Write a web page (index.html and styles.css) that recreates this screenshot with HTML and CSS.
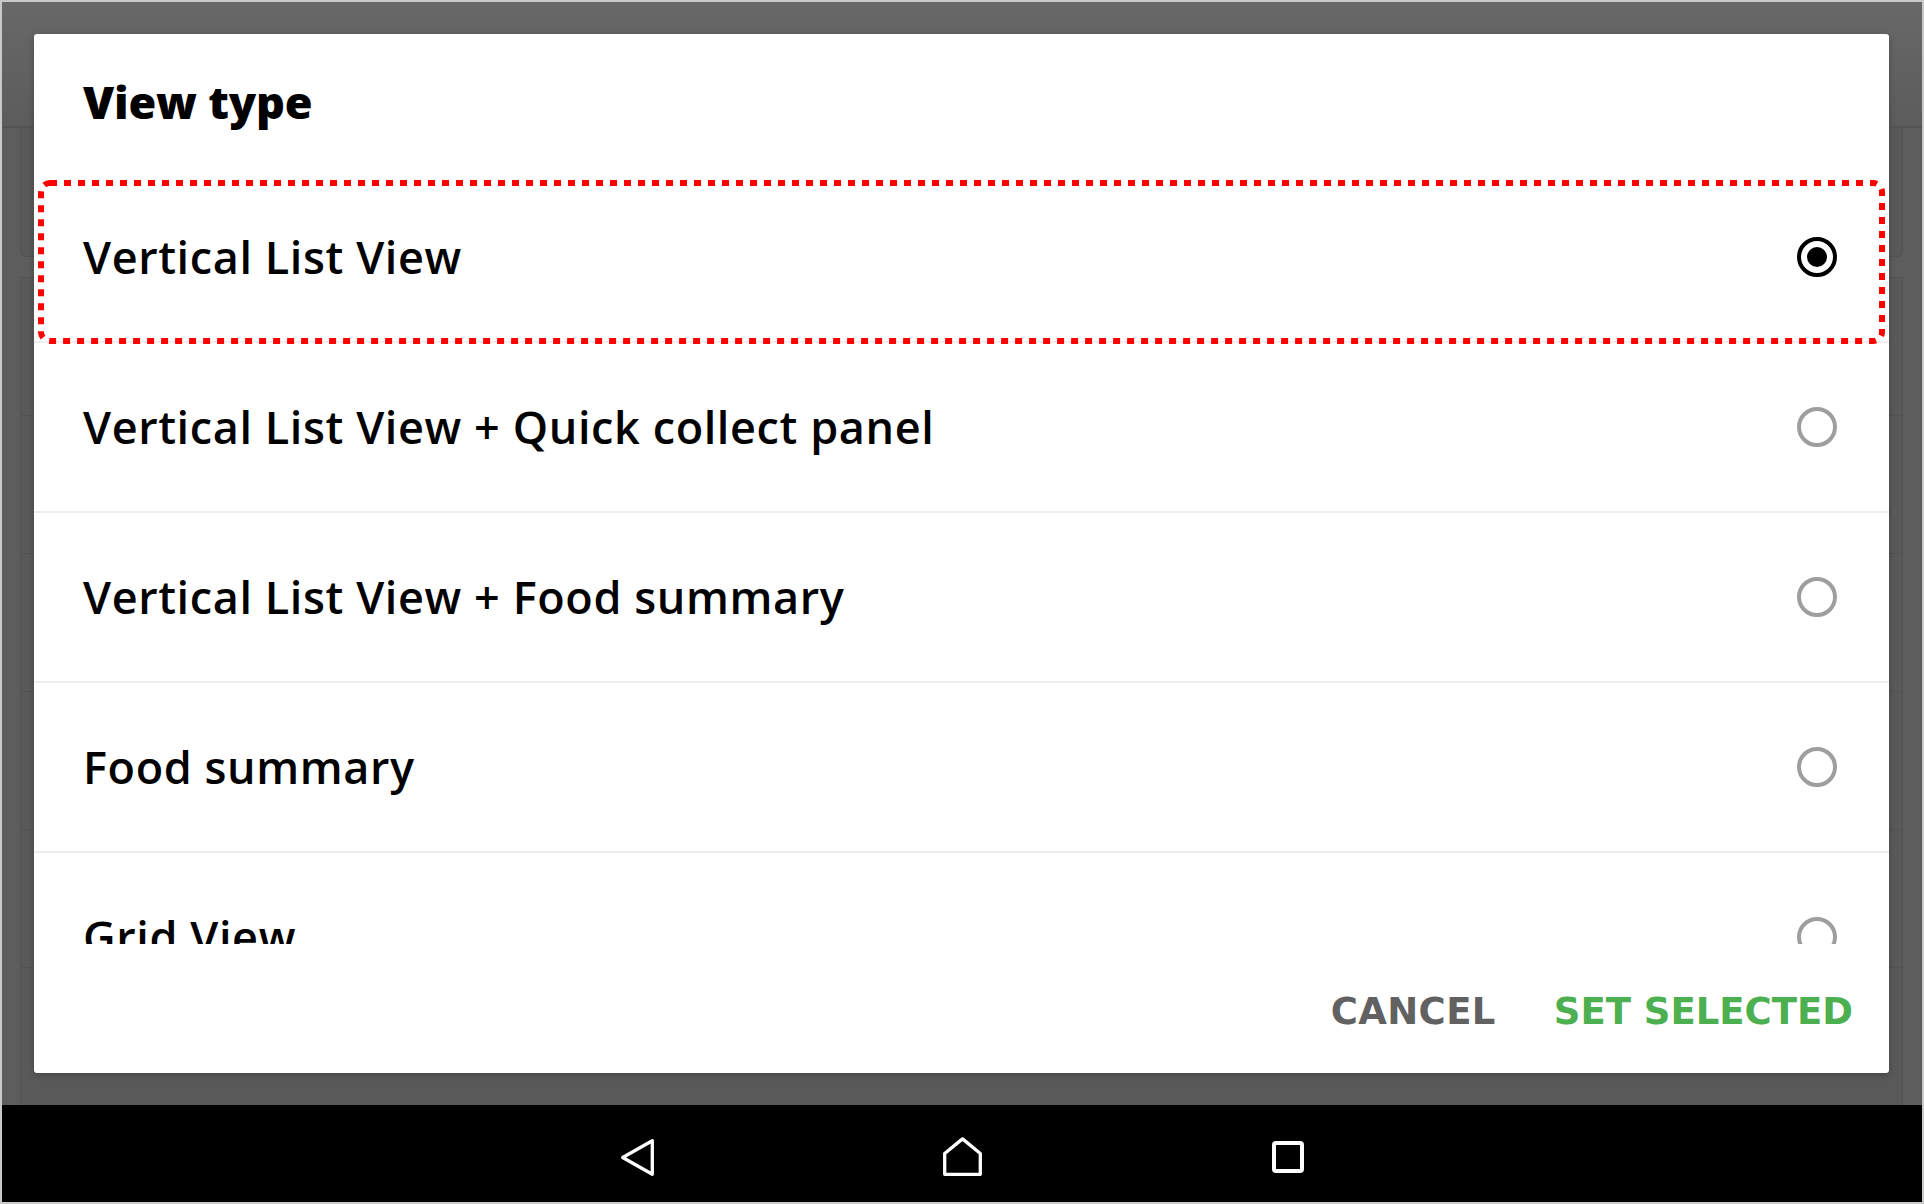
FILE: index.html
```html
<!DOCTYPE html>
<html>
<head>
<meta charset="utf-8">
<title>View type</title>
<link rel="stylesheet" href="styles.css">
</head>
<body>
<div class="screen">
  <div class="app">
    <div class="backdrop">
      <div class="bd-toolbar"></div>
      <div class="bd-list">
        <div class="bd-card first"></div>
        <div class="bd-card"></div>
        <div class="bd-card"></div>
        <div class="bd-card"></div>
        <div class="bd-card"></div>
        <div class="bd-card"></div>
        <div class="bd-card"></div>
      </div>
    </div>
    <div class="dialog">
      <div class="dlg-title">View type</div>
      <div class="dlg-list">
        <div class="opt selected">
          <span class="opt-label">Vertical List View</span>
          <span class="radio on"></span>
          <svg class="focus-ring" width="1847" height="164" viewBox="0 0 1847 164"><rect x="3" y="3" width="1841" height="158" rx="9" ry="9" fill="none" stroke="#ff0000" stroke-width="6" stroke-dasharray="7 7"/></svg>
        </div>
        <div class="opt">
          <span class="opt-label">Vertical List View + Quick collect panel</span>
          <span class="radio"></span>
        </div>
        <div class="opt">
          <span class="opt-label">Vertical List View + Food summary</span>
          <span class="radio"></span>
        </div>
        <div class="opt">
          <span class="opt-label">Food summary</span>
          <span class="radio"></span>
        </div>
        <div class="opt">
          <span class="opt-label">Grid View</span>
          <span class="radio"></span>
        </div>
      </div>
      <div class="dlg-actions">
        <button class="btn btn-cancel">CANCEL</button>
        <button class="btn btn-ok">SET SELECTED</button>
      </div>
    </div>
  </div>
  <nav class="navbar">
    <svg class="nav-icon" width="40" height="40" viewBox="0 0 40 40"><polygon points="5.7,20.5 35.3,3.7 35.3,37.3" fill="none" stroke="#fff" stroke-width="3.3" stroke-linejoin="round"/></svg>
    <svg class="nav-icon" width="40" height="40" viewBox="0 0 40 40"><polygon points="20.5,1.9 38.3,16.5 38.3,37.3 2.7,37.3 2.7,16.5" fill="none" stroke="#fff" stroke-width="3.3" stroke-linejoin="round"/></svg>
    <svg class="nav-icon" width="40" height="40" viewBox="0 0 40 40"><rect x="7" y="6" width="28" height="28" rx="2" fill="none" stroke="#fff" stroke-width="4"/></svg>
  </nav>
</div>
</body>
</html>
```

FILE: styles.css
```css
html, body {
  margin: 0;
  padding: 0;
  background: #c9c9c9;
}

.screen {
  width: 1924px;
  height: 1204px;
  box-sizing: border-box;
  border: 2px solid #c9c9c9;
  display: flex;
  flex-direction: column;
  overflow: hidden;
  font-family: "Open Sans", "Liberation Sans", sans-serif;
}

.app {
  height: 1103px;
  flex: none;
  display: grid;
  grid-template-columns: 100%;
  grid-template-rows: 100%;
}

.backdrop,
.dialog {
  grid-area: 1 / 1;
}

/* dimmed app behind the dialog */
.backdrop {
  background: #5d5d5d;
  display: flex;
  flex-direction: column;
}

.bd-toolbar {
  height: 124px;
  flex: none;
  background: linear-gradient(#686868, #5c5c5c);
  border-bottom: 2px solid #545454;
}

.bd-list {
  flex: 1;
  padding: 0 19px 0 18px;
  display: flex;
  flex-direction: column;
}

.bd-card {
  height: 138px;
  flex: none;
  box-sizing: border-box;
  background: #595959;
  border-left: 1px solid #525252;
  border-right: 1px solid #525252;
  border-top: 1px solid #525252;
}

.bd-card.first {
  height: 129px;
  border-top: none;
  border-bottom: 1px solid #525252;
  border-radius: 0 0 6px 6px;
  margin-bottom: 20px;
}

/* dialog */
.dialog {
  margin: 32px 33px 32px 32px;
  background: #ffffff;
  border-radius: 3px;
  box-shadow: 0 2px 6px rgba(0, 0, 0, 0.25);
  display: flex;
  flex-direction: column;
  overflow: hidden;
}

.dlg-title {
  height: 139px;
  flex: none;
  box-sizing: border-box;
  padding: 38px 0 0 49px;
  font-size: 45px;
  line-height: 60px;
  font-weight: 800;
  letter-spacing: -0.2px;
  color: #000;
}

.dlg-list {
  height: 771px;
  flex: none;
  overflow: hidden;
}

.opt {
  position: relative;
  height: 170px;
  box-sizing: border-box;
  border-bottom: 2px solid #eeeeee;
  display: flex;
  align-items: center;
  justify-content: space-between;
  padding: 0 52px 0 49px;
}

.opt-label {
  font-size: 45px;
  line-height: 60px;
  font-weight: 600;
  letter-spacing: 0.6px;
  color: #000;
}

.radio {
  width: 40px;
  height: 40px;
  box-sizing: border-box;
  border: 4px solid #9e9e9e;
  border-radius: 50%;
  display: flex;
  align-items: center;
  justify-content: center;
}

.radio.on {
  border-color: #000;
}

.radio.on::after {
  content: "";
  width: 20px;
  height: 20px;
  border-radius: 50%;
  background: #000;
}

.focus-ring {
  position: absolute;
  left: 4px;
  top: 7px;
  pointer-events: none;
}

.dlg-actions {
  flex: 1;
  display: flex;
  justify-content: flex-end;
  align-items: flex-start;
  gap: 58px;
  padding: 43px 36px 0 0;
}

.btn {
  border: none;
  background: none;
  padding: 0;
  margin: 0;
  font-family: "DejaVu Sans", "Open Sans", sans-serif;
  font-size: 37px;
  line-height: 50px;
  font-weight: 700;
}

.btn-cancel {
  color: #616161;
  letter-spacing: 0.4px;
}

.btn-ok {
  color: #4caf50;
}

/* navigation bar */
.navbar {
  flex: 1;
  background: #000;
  display: flex;
  justify-content: center;
  align-items: flex-start;
  gap: 285px;
  padding: 32px 0 0 0;
}

.nav-icon {
  display: block;
  flex: none;
}
```
